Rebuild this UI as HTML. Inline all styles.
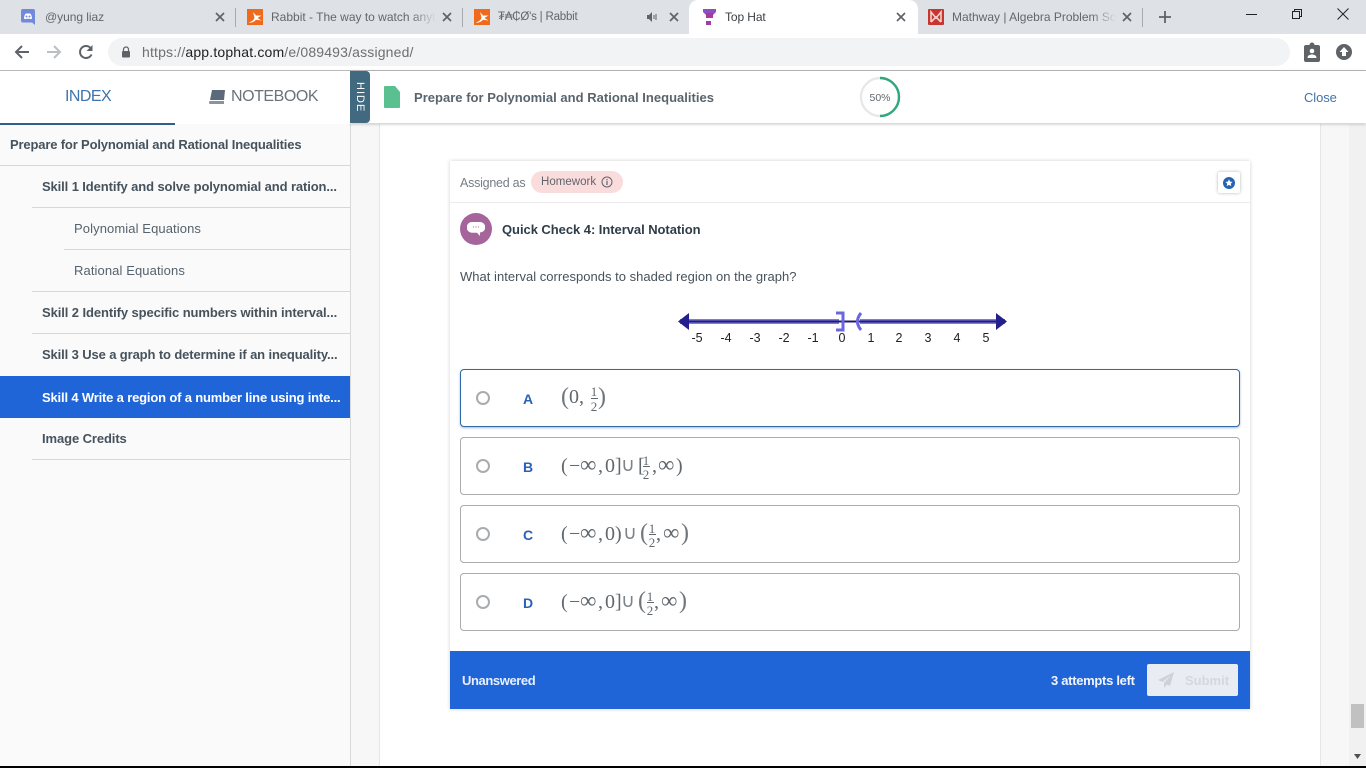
<!DOCTYPE html>
<html><head><meta charset="utf-8"><title>Top Hat</title>
<style>
html,body{margin:0;padding:0;width:1366px;height:768px;overflow:hidden;background:#fff}
body{position:relative;font-family:"Liberation Sans","DejaVu Sans",sans-serif;color:#3c4043}
.a,.t{position:absolute}
.t{white-space:nowrap;line-height:20px;height:20px}
.tab{font-size:12px;color:#63676b}
.fade{overflow:hidden;-webkit-mask-image:linear-gradient(90deg,#000 85%,transparent)}
.side{font-size:13px;font-weight:bold;color:#46525c;letter-spacing:-.1px}
.sub{font-size:13px;color:#56626c;letter-spacing:.1px}
.rule{position:absolute;height:1px;background:#d5d8da}
.opt{position:absolute;left:460px;width:778px;height:56px;border:1px solid #a9adb0;border-radius:4px;background:#fff}
.radio{position:absolute;left:476px;width:10px;height:10px;border:2px solid #a8acae;border-radius:50%;background:#fff}
.let{position:absolute;left:523px;font-size:14px;font-weight:bold;color:#2b62b8;line-height:20px}
.m{position:absolute;font-family:"Liberation Serif",serif;font-size:20px;color:#60676d;line-height:24px;white-space:nowrap}
.inf{font-size:23px}
.big{font-size:24px;font-weight:normal;color:#70777c}
.cup{font-family:"DejaVu Sans",sans-serif;font-size:19px;color:#7d8388}
.fr{position:absolute;font-family:"Liberation Serif",serif;font-size:13px;color:#60676d;line-height:10px;width:10px;text-align:center}
.fb{position:absolute;height:1px;width:7px;background:#60676d}
.lab{position:absolute;top:331px;font-size:12.500px;color:#222;line-height:15px;width:20px;text-align:center}
</style></head><body>

<!-- chrome -->
<div class="a" style="left:0;top:0;width:1366px;height:34px;background:#dee1e6"></div>
<div class="a" style="left:0;top:34px;width:1366px;height:36px;background:#fff"></div>
<div class="a" style="left:0;top:70px;width:1366px;height:1px;background:#b9b9b9"></div>

<div class="a" style="left:689px;top:0;width:229px;height:34px;background:#fff;border-radius:9px 9px 0 0"></div>
<div class="a" style="left:235px;top:8px;width:1px;height:19px;background:#a8abb0"></div>
<div class="a" style="left:462px;top:8px;width:1px;height:19px;background:#a8abb0"></div>
<div class="a" style="left:1142px;top:8px;width:1px;height:19px;background:#a8abb0"></div>

<!-- favicons -->
<svg class="a" style="left:21px;top:9px" width="14" height="16" viewBox="0 0 14 16"><path d="M2 0h10a2 2 0 0 1 2 2v14l-3-2.500H2a2 2 0 0 1-2-2V2a2 2 0 0 1 2-2z" fill="#7289da"/><path d="M3 9.500C3 7 4 5 5 4.500h4C10 5 11 7 11 9.500c-1 .8-2 .8-2.500.3H5.500C5 10.300 4 10.300 3 9.500z" fill="#fff"/><circle cx="5.500" cy="7.500" r="1" fill="#7289da"/><circle cx="8.500" cy="7.500" r="1" fill="#7289da"/></svg>
<div class="t tab" style="left:45px;top:7px;letter-spacing:-.05px">@yung liaz</div>
<svg class="a" style="left:214px;top:11px" width="12" height="12" viewBox="0 0 12 12"><path d="M2 2l8 8M10 2l-8 8" stroke="#5f6368" stroke-width="1.700"/></svg>

<svg class="a" style="left:247px;top:9px" width="16" height="16" viewBox="0 0 16 16"><rect width="16" height="16" fill="#f06a1d"/><path d="M1.500 13.500C5 12.500 7 11 7.500 8.500L6 3l3 3.500h5.500L10.500 9l4 2.500-5.500-.8C7 13 4.500 14 1.500 13.500z" fill="#fff"/></svg>
<div class="t tab fade" style="left:271px;top:7px;width:165px">Rabbit - The way to watch anything</div>
<svg class="a" style="left:441px;top:11px" width="12" height="12" viewBox="0 0 12 12"><path d="M2 2l8 8M10 2l-8 8" stroke="#5f6368" stroke-width="1.700"/></svg>

<svg class="a" style="left:474px;top:9px" width="16" height="16" viewBox="0 0 16 16"><rect width="16" height="16" fill="#f06a1d"/><path d="M1.500 13.500C5 12.500 7 11 7.500 8.500L6 3l3 3.500h5.500L10.500 9l4 2.500-5.500-.8C7 13 4.500 14 1.500 13.500z" fill="#fff"/></svg>
<div class="t tab" style="left:498px;top:7px;font-size:11.500px;letter-spacing:-.2px">₮₳₵Ø's | Rabbit</div>
<svg class="a" style="left:647px;top:12px" width="11" height="10" viewBox="0 0 11 10"><path d="M0 3h2l3-3v10L2 7H0z" fill="#5f6368"/><path d="M7 3v4M9 2v6" stroke="#5f6368" stroke-width="1"/></svg>
<svg class="a" style="left:668px;top:11px" width="12" height="12" viewBox="0 0 12 12"><path d="M2 2l8 8M10 2l-8 8" stroke="#5f6368" stroke-width="1.700"/></svg>

<svg class="a" style="left:702px;top:9px" width="15" height="16" viewBox="0 0 15 16"><path d="M1 0h13v3l-3 3v3H4V6L1 3z" fill="#8e4fc0"/><path d="M4 4h7v5H4z" fill="#a8389f"/><rect x="4" y="12" width="5" height="4" fill="#a03bb0"/></svg>
<div class="t tab" style="left:725px;top:7px;color:#3c4043;letter-spacing:-.1px">Top Hat</div>
<svg class="a" style="left:895px;top:11px" width="12" height="12" viewBox="0 0 12 12"><path d="M2 2l8 8M10 2l-8 8" stroke="#5f6368" stroke-width="1.700"/></svg>

<svg class="a" style="left:928px;top:9px" width="16" height="16" viewBox="0 0 16 16"><rect width="16" height="16" rx="1" fill="#c8352e"/><path d="M3 13V3l5 6 5-6v10M3 13l5-5 5 5" fill="none" stroke="#f4d0cc" stroke-width="1.600"/></svg>
<div class="t tab fade" style="left:952px;top:7px;width:164px">Mathway | Algebra Problem Solver</div>
<svg class="a" style="left:1121px;top:11px" width="12" height="12" viewBox="0 0 12 12"><path d="M2 2l8 8M10 2l-8 8" stroke="#5f6368" stroke-width="1.700"/></svg>
<svg class="a" style="left:1158px;top:10px" width="14" height="14" viewBox="0 0 14 14"><path d="M7 1v12M1 7h12" stroke="#5f6368" stroke-width="1.800"/></svg>

<!-- window controls -->
<div class="a" style="left:1246px;top:14px;width:11px;height:1px;background:#222"></div>
<svg class="a" style="left:1291px;top:8px" width="12" height="12" viewBox="0 0 12 12"><path d="M1.500 3.500h7v7h-7zM3.500 3.500v-2h7v7h-2" fill="none" stroke="#222" stroke-width="1"/></svg>
<svg class="a" style="left:1337px;top:8px" width="12" height="12" viewBox="0 0 12 12"><path d="M.5.500l11 11M11.500.500l-11 11" stroke="#222" stroke-width="1"/></svg>

<!-- toolbar -->
<svg class="a" style="left:14px;top:44px" width="16" height="16" viewBox="0 0 16 16"><path d="M15 8H2M8 2L2 8l6 6" fill="none" stroke="#5f6368" stroke-width="2"/></svg>
<svg class="a" style="left:46px;top:44px" width="16" height="16" viewBox="0 0 16 16"><path d="M1 8h13M8 2l6 6-6 6" fill="none" stroke="#bcbfc3" stroke-width="2"/></svg>
<svg class="a" style="left:78px;top:44px" width="16" height="16" viewBox="0 0 16 16"><path d="M13.500 10.500A6 6 0 1 1 12.500 4" fill="none" stroke="#5f6368" stroke-width="2"/><path d="M14.500 1v6h-6z" fill="#5f6368"/></svg>
<div class="a" style="left:108px;top:38px;width:1182px;height:28px;border-radius:14px;background:#f1f3f4"></div>
<svg class="a" style="left:121px;top:46px" width="10" height="12" viewBox="0 0 10 12"><path d="M2.500 5V3.500a2.500 2.500 0 0 1 5 0V5" fill="none" stroke="#5f6368" stroke-width="1.200"/><rect x="1" y="5" width="8" height="6.500" rx="1" fill="#5f6368"/></svg>
<div class="t" style="left:142px;top:42px;font-size:14px;color:#6b7074;letter-spacing:.17px">https://<span style="color:#202124">app.tophat.com</span>/e/089493/assigned/</div>
<svg class="a" style="left:1304px;top:42px" width="16" height="20" viewBox="0 0 16 20"><path d="M2 3h3.500a2.500 2.500 0 0 1 5 0H14a2 2 0 0 1 2 2v13a2 2 0 0 1-2 2H2a2 2 0 0 1-2-2V5a2 2 0 0 1 2-2z" fill="#5f6368"/><circle cx="8" cy="9" r="2.300" fill="#fff"/><path d="M3.500 16c0-2.500 2-3.500 4.500-3.500s4.500 1 4.500 3.500z" fill="#fff"/></svg>
<svg class="a" style="left:1336px;top:44px" width="16" height="16" viewBox="0 0 16 16"><circle cx="8" cy="8" r="8" fill="#5f6368"/><path d="M8 3l4.500 5H10v4H6V8H3.500z" fill="#fff"/></svg>

<!-- page background -->
<div class="a" style="left:0;top:124px;width:350px;height:642px;background:#fafafa"></div>
<div class="a" style="left:350px;top:124px;width:1px;height:642px;background:#d8d8d8"></div>
<div class="a" style="left:351px;top:124px;width:29px;height:642px;background:#f7f7f7"></div>
<div class="a" style="left:379px;top:124px;width:1px;height:642px;background:#e6e6e6"></div>
<div class="a" style="left:1320px;top:124px;width:29px;height:642px;background:#f7f7f7;border-left:1px solid #e6e6e6;box-sizing:border-box"></div>
<div class="a" style="left:1349px;top:124px;width:17px;height:642px;background:#f1f1f1"></div>
<div class="a" style="left:1351px;top:704px;width:13px;height:24px;background:#c1c1c1"></div>
<svg class="a" style="left:1353px;top:754px" width="9" height="6"><path d="M1 0h7L4.500 5z" fill="#505050"/></svg>
<div class="a" style="left:0;top:766px;width:1366px;height:2px;background:#000"></div>

<!-- header bar -->
<div class="a" style="left:350px;top:71px;width:1016px;height:52px;background:#fff;box-shadow:0 1px 3px rgba(0,0,0,.25)"></div>
<div class="a" style="left:0;top:71px;width:350px;height:53px;background:#fff"></div>
<div class="a" style="left:0;top:123px;width:175px;height:2px;background:#2f5f8a"></div>
<div class="t" style="left:65px;top:87px;font-size:16px;color:#3f74ad;letter-spacing:-.55px">INDEX</div>
<svg class="a" style="left:209px;top:90px" width="16" height="15" viewBox="0 0 16 15"><path d="M3 0h13l-1 10H1z" fill="#5a6a7a"/><path d="M1 11h14v3H2a1.500 1.500 0 0 1-1-3z" fill="#8a949d"/></svg>
<div class="t" style="left:231px;top:87px;font-size:16px;color:#6b7379;letter-spacing:-.45px">NOTEBOOK</div>

<div class="a" style="left:350px;top:71px;width:20px;height:52px;background:#41697f;border-radius:0 4px 4px 0"></div>
<div class="t" style="left:345px;top:87px;width:30px;text-align:center;font-size:11px;color:#fff;letter-spacing:1px;transform:rotate(90deg)">HIDE</div>
<svg class="a" style="left:384px;top:86px" width="16" height="22" viewBox="0 0 16 22"><path d="M1 0h10l5 6v15a1 1 0 0 1-1 1H1a1 1 0 0 1-1-1V1a1 1 0 0 1 1-1z" fill="#5bc08f"/></svg>
<div class="t" style="left:414px;top:88px;font-size:13px;font-weight:bold;color:#5a646c;letter-spacing:.02px">Prepare for Polynomial and Rational Inequalities</div>

<svg class="a" style="left:859px;top:76px" width="42" height="42" viewBox="0 0 42 42"><circle cx="21" cy="21" r="19" fill="none" stroke="#e8e8e8" stroke-width="2.400"/><path d="M21 2a19 19 0 0 1 0 38" fill="none" stroke="#2fa87c" stroke-width="2.400"/></svg>
<div class="t" style="left:860px;top:88px;width:40px;text-align:center;font-size:10.500px;color:#5f676d">50%</div>
<div class="t" style="left:1304px;top:88px;font-size:13px;color:#4573a8;letter-spacing:-.1px">Close</div>

<!-- sidebar -->
<div class="t side" style="left:10px;top:135px;letter-spacing:-.16px">Prepare for Polynomial and Rational Inequalities</div>
<div class="rule" style="left:0;top:165px;width:350px"></div>
<div class="t side" style="left:42px;top:177px;letter-spacing:-.11px">Skill 1 Identify and solve polynomial and ration...</div>
<div class="rule" style="left:32px;top:207px;width:318px"></div>
<div class="t sub" style="left:74px;top:219px">Polynomial Equations</div>
<div class="rule" style="left:64px;top:249px;width:286px"></div>
<div class="t sub" style="left:74px;top:261px">Rational Equations</div>
<div class="rule" style="left:32px;top:291px;width:318px"></div>
<div class="t side" style="left:42px;top:303px;letter-spacing:-.09px">Skill 2 Identify specific numbers within interval...</div>
<div class="rule" style="left:32px;top:333px;width:318px"></div>
<div class="t side" style="left:42px;top:345px;letter-spacing:-.12px">Skill 3 Use a graph to determine if an inequality...</div>
<div class="a" style="left:0;top:376px;width:350px;height:42px;background:#2065d8"></div>
<div class="t side" style="left:42px;top:388px;color:#fff;letter-spacing:-.17px">Skill 4 Write a region of a number line using inte...</div>
<div class="t side" style="left:42px;top:429px;letter-spacing:-.1px">Image Credits</div>
<div class="rule" style="left:32px;top:459px;width:318px"></div>

<!-- card -->
<div class="a" style="left:450px;top:161px;width:800px;height:548px;background:#fff;box-shadow:0 0 4px rgba(0,0,0,.18)"></div>
<div class="a" style="left:450px;top:202px;width:800px;height:1px;background:#ececec"></div>
<div class="t" style="left:460px;top:173px;font-size:12.500px;color:#767d83;letter-spacing:-.25px">Assigned as</div>
<div class="a" style="left:531px;top:171px;width:92px;height:22px;border-radius:11px;background:#fbdcdc"></div>
<div class="t" style="left:541px;top:172px;font-size:11.500px;color:#5e666c;letter-spacing:.02px">Homework</div>
<svg class="a" style="left:601px;top:176px" width="12" height="12" viewBox="0 0 12 12"><circle cx="6" cy="6" r="5" fill="none" stroke="#5e666c" stroke-width="1"/><path d="M6 5v4M6 3v1.200" stroke="#5e666c" stroke-width="1.200"/></svg>
<div class="a" style="left:1218px;top:172px;width:22px;height:21px;background:#fff;box-shadow:0 0 3px rgba(0,0,0,.3);border-radius:2px"></div>
<svg class="a" style="left:1223px;top:177px" width="12" height="12" viewBox="0 0 12 12"><circle cx="6" cy="6" r="6" fill="#2462b4"/><path d="M6 2.300l1.100 2.300 2.500.3-1.800 1.700.5 2.500L6 7.900 3.700 9.100l.5-2.500-1.800-1.700 2.500-.3z" fill="#fff"/></svg>

<div class="a" style="left:460px;top:213px;width:32px;height:32px;border-radius:50%;background:#a5659b"></div>
<svg class="a" style="left:467px;top:221px" width="18" height="17" viewBox="0 0 18 17"><path d="M5 1h8a4.500 4.500 0 0 1 0 10.500l0 3.500-3-3.300H5A5 5 0 0 1 5 1z" fill="#fff"/><circle cx="6.500" cy="6" r=".7" fill="#c9a"/><circle cx="9" cy="6" r=".7" fill="#c9a"/><circle cx="11.500" cy="6" r=".7" fill="#c9a"/></svg>
<div class="t" style="left:502px;top:220px;font-size:13px;font-weight:bold;color:#2f3d49;letter-spacing:-.05px">Quick Check 4: Interval Notation</div>
<div class="t" style="left:460px;top:267px;font-size:13px;color:#47525b;letter-spacing:.02px">What interval corresponds to shaded region on the graph?</div>

<!-- number line -->
<svg class="a" style="left:675px;top:308px" width="336" height="26" viewBox="0 0 336 26">
<path d="M5 13.500h159M185 13.500h145" stroke="#7f7cd6" stroke-width="5"/>
<path d="M5 13.500h326" stroke="#1f1d80" stroke-width="2"/>
<path d="M164 13.500h20" stroke="#222" stroke-width="1.200"/>
<path d="M3 13.500L14 5v17zM332 13.500L321 5v17z" fill="#23208e"/>
<path d="M161 5h7v17h-7" fill="none" stroke="#6a66e0" stroke-width="3"/>
<path d="M186 5q-7 8.500 0 17" fill="none" stroke="#6a66e0" stroke-width="3"/>
</svg>
<div class="lab" style="left:687px">-5</div><div class="lab" style="left:716px">-4</div><div class="lab" style="left:745px">-3</div><div class="lab" style="left:774px">-2</div><div class="lab" style="left:803px">-1</div><div class="lab" style="left:832px">0</div><div class="lab" style="left:861px">1</div><div class="lab" style="left:889px">2</div><div class="lab" style="left:918px">3</div><div class="lab" style="left:947px">4</div><div class="lab" style="left:976px">5</div>

<!-- options -->
<div class="opt" style="top:369px;border-color:#2f6aa8;box-shadow:0 1px 2px rgba(30,80,160,.4)"></div>
<div class="radio" style="top:391px"></div>
<div class="let" style="top:389px">A</div>
<div class="m big" style="left:561px;top:385px">(</div>
<div class="m" style="left:569px;top:385px">0,</div>
<div class="fr" style="left:589px;top:387px">1</div><div class="fb" style="left:591px;top:398px"></div><div class="fr" style="left:589px;top:402px">2</div>
<div class="m big" style="left:598px;top:385px">)</div>

<div class="opt" style="top:437px"></div>
<div class="radio" style="top:459px"></div>
<div class="let" style="top:457px">B</div>
<div class="m" style="left:561px;top:454px">(</div><div class="m" style="left:569px;top:454px">−</div><div class="m inf" style="left:580px;top:453px">∞</div><div class="m" style="left:598px;top:454px">,</div><div class="m" style="left:605px;top:454px">0]</div>
<div class="m cup" style="left:621px;top:453px">∪</div>
<div class="m" style="left:638px;top:454px">[</div>
<div class="fr" style="left:641px;top:456px">1</div><div class="fb" style="left:643px;top:466px"></div><div class="fr" style="left:641px;top:470px">2</div>
<div class="m" style="left:652px;top:454px">,</div><div class="m inf" style="left:658px;top:453px">∞</div><div class="m" style="left:676px;top:454px">)</div>

<div class="opt" style="top:505px"></div>
<div class="radio" style="top:527px"></div>
<div class="let" style="top:525px">C</div>
<div class="m" style="left:561px;top:522px">(</div><div class="m" style="left:569px;top:522px">−</div><div class="m inf" style="left:580px;top:521px">∞</div><div class="m" style="left:598px;top:522px">,</div><div class="m" style="left:605px;top:522px">0)</div>
<div class="m cup" style="left:623px;top:521px">∪</div>
<div class="m big" style="left:640px;top:521px">(</div>
<div class="fr" style="left:647px;top:524px">1</div><div class="fb" style="left:649px;top:534px"></div><div class="fr" style="left:647px;top:538px">2</div>
<div class="m" style="left:656px;top:522px">,</div><div class="m inf" style="left:663px;top:521px">∞</div><div class="m big" style="left:681px;top:521px">)</div>

<div class="opt" style="top:573px"></div>
<div class="radio" style="top:595px"></div>
<div class="let" style="top:593px">D</div>
<div class="m" style="left:561px;top:590px">(</div><div class="m" style="left:569px;top:590px">−</div><div class="m inf" style="left:580px;top:589px">∞</div><div class="m" style="left:598px;top:590px">,</div><div class="m" style="left:605px;top:590px">0]</div>
<div class="m cup" style="left:621px;top:589px">∪</div>
<div class="m big" style="left:638px;top:589px">(</div>
<div class="fr" style="left:645px;top:592px">1</div><div class="fb" style="left:647px;top:602px"></div><div class="fr" style="left:645px;top:606px">2</div>
<div class="m" style="left:654px;top:590px">,</div><div class="m inf" style="left:661px;top:589px">∞</div><div class="m big" style="left:679px;top:589px">)</div>

<!-- footer -->
<div class="a" style="left:450px;top:651px;width:800px;height:58px;background:#2065d8"></div>
<div class="t" style="left:462px;top:671px;font-size:13px;font-weight:bold;color:#e8effa;letter-spacing:-.4px">Unanswered</div>
<div class="t" style="left:1051px;top:671px;font-size:13px;font-weight:bold;color:#f0f4fb;letter-spacing:-.3px">3 attempts left</div>
<div class="a" style="left:1147px;top:664px;width:91px;height:32px;background:#e9edf3;border-radius:2px"></div>
<svg class="a" style="left:1158px;top:672px" width="16" height="16" viewBox="0 0 16 16"><path d="M16 0L0 8l4.500 2L13 3 6 11v5l3-3.500 3 1.500z" fill="#cdd2d8"/></svg>
<div class="t" style="left:1185px;top:671px;font-size:13px;font-weight:bold;color:#d3d8de">Submit</div>
</body></html>
